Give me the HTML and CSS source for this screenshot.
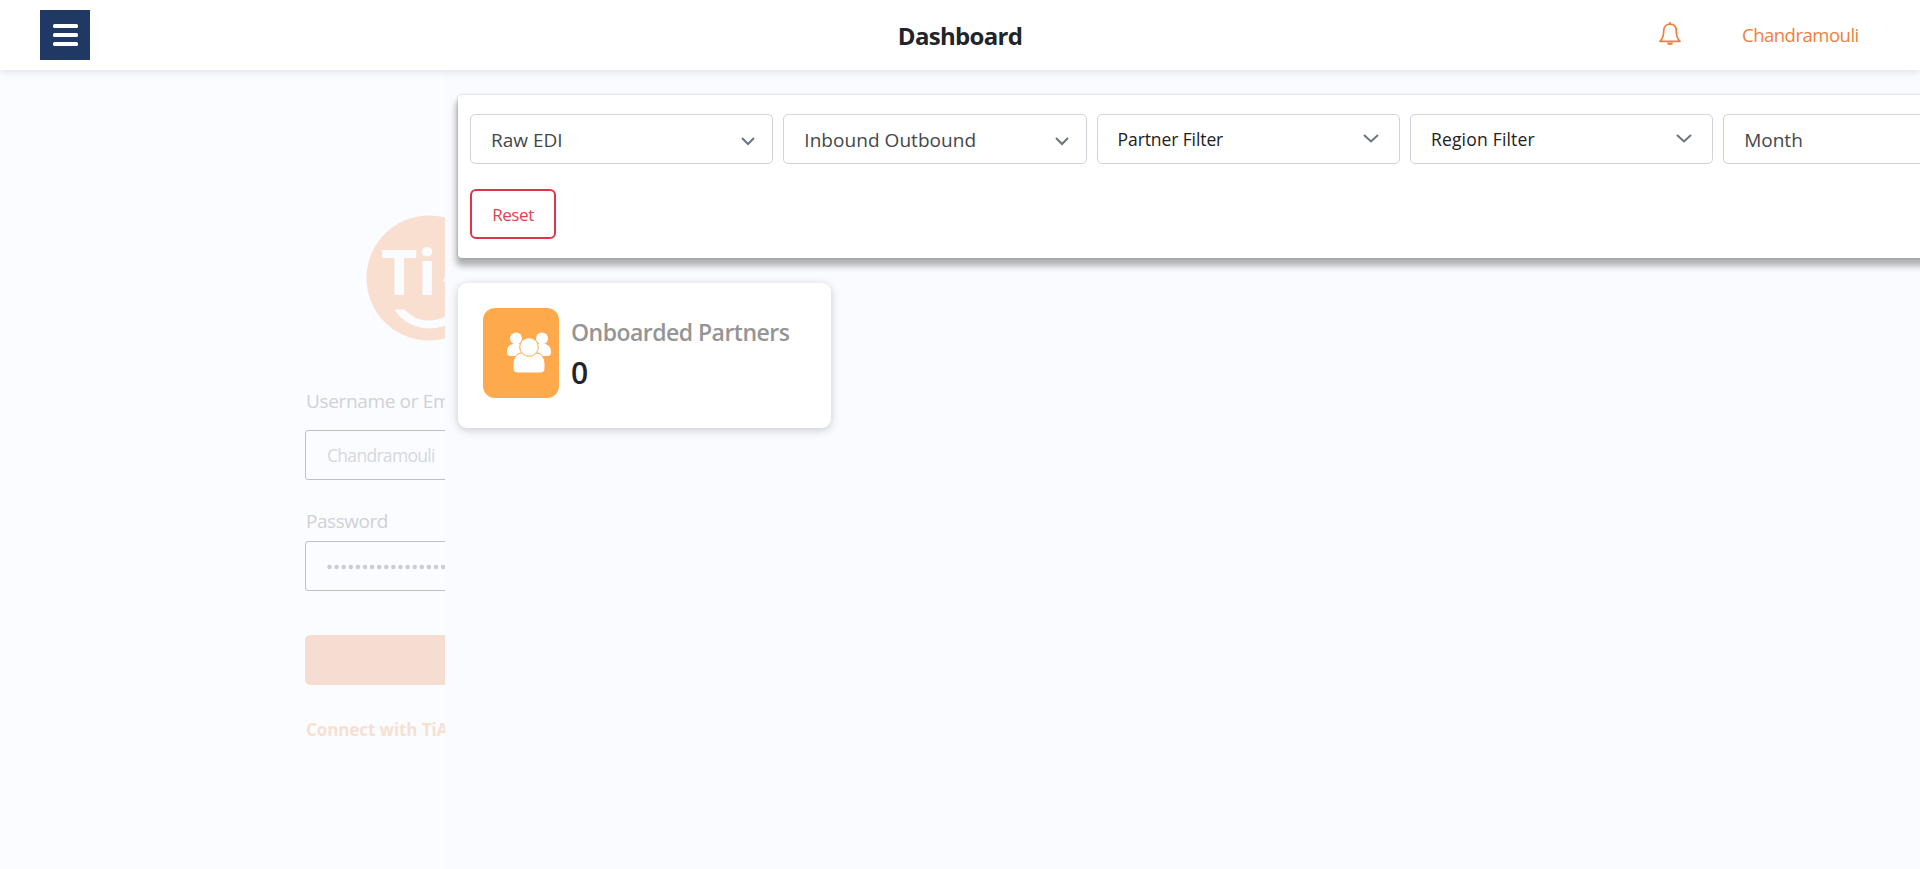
FILE: index.html
```html
<!DOCTYPE html>
<html lang="en">
<head>
<meta charset="utf-8">
<title>Dashboard</title>
<link rel="stylesheet" href="styles.css">
</head>
<body>
<header class="topbar">
  <button class="menu" aria-label="Menu"><span class="bar"></span><span class="bar"></span><span class="bar"></span></button>
  <h1 class="title">Dashboard</h1>
  <div class="account">
    <svg class="bell" viewBox="0 0 24 24"><path d="M12 2.200C8 2.200 5.700 5 5.700 9C5.700 14 4.500 17 2 19.300H22C19.500 17 18.300 14 18.300 9C18.300 5 16 2.200 12 2.200zM12 .800V2.200"/><path class="clapper" d="M9 20.500a3 2.500 0 0 0 6 0z"/></svg>
    <span class="user">Chandramouli</span>
  </div>
</header>
<div class="page">
  <section class="login">
    <svg class="logo" viewBox="0 0 126 126">
      <circle class="disc" cx="63" cy="63" r="62.5"/>
      <text class="logo-text" x="15" y="79.5">Ti</text>
      <path class="cut" d="M77 66.500 79 62V66.500zM28.500 94.500H38.500Q48 105.500 63 105.500Q74 105.500 82 100V109Q74 113.500 63 113.500Q40 112.500 28.500 94.500z"/>
    </svg>
    <label class="label">Username or Em</label>
    <div class="input"><span class="input-text">Chandramouli</span></div>
    <label class="label label-password">Password</label>
    <div class="input"><svg class="dots" viewBox="0 0 170 6"><path d="M2.500 3H170"/></svg></div>
    <div class="submit"></div>
    <a class="connect">Connect with TiA</a>
  </section>
  <main class="dashboard">
    <section class="filters">
      <div class="row">
        <div class="select"><span class="value raw">Raw EDI</span><svg class="arrow" viewBox="0 0 16 10"><path d="M2 2 8 8 14 2"/></svg></div>
        <div class="select"><span class="value inout">Inbound Outbound</span><svg class="arrow" viewBox="0 0 16 10"><path d="M2 2 8 8 14 2"/></svg></div>
        <div class="select"><span class="value picker">Partner Filter</span><svg class="arrow wide" viewBox="0 0 18 10"><path d="M2 2 9 8.500 16 2"/></svg></div>
        <div class="select"><span class="value picker region">Region Filter</span><svg class="arrow wide" viewBox="0 0 18 10"><path d="M2 2 9 8.500 16 2"/></svg></div>
        <div class="select"><span class="value month">Month</span></div>
      </div>
      <button class="reset">Reset</button>
    </section>
    <section class="card">
      <div class="badge">
        <svg class="people" viewBox="0 0 44 42">
          <circle cx="9" cy="6.500" r="6"/><circle cx="35" cy="6.500" r="6"/>
          <path d="M6 12H16V24H3Q0 24 0 20Q0 13 6 12zM38 12H28V24H41Q44 24 44 20Q44 13 38 12z"/>
          <path class="ring" d="M14 21H30Q37 22 38 31V36Q38 41 33 41H11Q6 41 6 36V31Q7 22 14 21z"/>
          <circle class="ring" cx="22" cy="15" r="9.300"/>
        </svg>
      </div>
      <div class="stat"><span class="stat-name">Onboarded Partners</span><span class="stat-value">0</span></div>
    </section>
  </main>
</div>
</body>
</html>
```
FILE: styles.css
```css
* { box-sizing: border-box; }
body {
  margin: 0;
  height: 869px;
  overflow: hidden;
  background: #fbfcff;
  font-family: "Open Sans", "Noto Sans", sans-serif;
  color: #212529;
}
.topbar {
  position: relative;
  display: grid;
  grid-template-columns: 1fr auto 1fr;
  align-items: center;
  height: 70px;
  padding: 0 62px 0 40px;
  background: #fff;
  box-shadow: 0 2px 8px rgba(33, 37, 41, .12);
}
.menu {
  display: flex;
  flex-direction: column;
  gap: 5px;
  width: 50px;
  height: 50px;
  padding: 14px 12px 0 13px;
  border: 0;
  background: #203864;
}
.bar { height: 4px; border-radius: 1.500px; background: #fff; }
.title {
  margin: 2px -22px 0 0;
  font-size: 24px;
  line-height: 34px;
  font-weight: 700;
  letter-spacing: -.7px;
}
.account {
  display: flex;
  justify-content: flex-end;
  align-items: center;
  gap: 60px;
  color: #ee7f40;
}
.bell { width: 24px; height: 24px; margin-top: -3px; fill: none; stroke: currentColor; stroke-width: 1.700; stroke-linejoin: round; stroke-linecap: round; }
.clapper { fill: currentColor; stroke: none; }
.user { width: 116px; margin-top: -2px; font-size: 18.500px; white-space: nowrap; letter-spacing: -.5px; }
.page { display: flex; height: 799px; }
.login {
  display: flex;
  flex-direction: column;
  flex: 0 0 445px;
  padding: 145px 0 0 305px;
  overflow: hidden;
  white-space: nowrap;
}
.logo { width: 126px; height: 126px; margin-left: 61px; flex: none; }
.disc { fill: #f9dfd0; }
.cut { fill: #fbfcff; }
.logo-text { fill: #fbfcff; font-size: 63px; font-weight: 700; }
.label {
  margin: 46px 0 0 1px;
  height: 43px;
  font-size: 19px;
  line-height: 28px;
  letter-spacing: -.35px;
  color: #cfd1d5;
}
.label-password { margin-top: 27px; height: 34px; letter-spacing: -.45px; }
.input {
  display: flex;
  align-items: center;
  flex: none;
  width: 300px;
  height: 50px;
  padding-left: 21px;
  border: 1px solid #bec0c4;
  border-radius: 3px;
}
.input-text { font-size: 17.500px; letter-spacing: -.7px; color: #d6d8dc; }
.dots { width: 170px; height: 6px; margin-top: 2px; stroke: #cbcdd1; stroke-width: 4.600; stroke-linecap: round; stroke-dasharray: 0 7.100; }
.submit {
  flex: none;
  width: 300px;
  height: 50px;
  margin-top: 44px;
  border-radius: 5px;
  background: #f6ddd1;
}
.connect { margin: 32px 0 0 1px; font-size: 17px; line-height: 26px; font-weight: 700; letter-spacing: -.1px; color: #f7dfd2; }
.dashboard {
  flex: 1;
  min-width: 0;
  padding: 25px 0 0 13px;
  overflow: hidden;
  background: #fafbff;
}
.filters {
  width: 1600px;
  height: 163px;
  padding: 19px 12px;
  border-radius: 4px;
  background: #fff;
  box-shadow: 0 0 3px rgba(0, 0, 0, .2), -1px 7px 6px 1px #b0b1b2;
}
.row { display: flex; gap: 10px; }
.select {
  display: flex;
  align-items: center;
  justify-content: space-between;
  flex: 0 0 303.300px;
  height: 50px;
  padding: 0 16px 0 20px;
  border: 1px solid #ced4da;
  border-radius: 5px;
}
.value { margin-top: 1px; font-size: 19px; line-height: 28px; color: #43474b; white-space: nowrap; }
.inout { letter-spacing: .05px; }
.picker { margin-top: -1px; font-size: 17.500px; letter-spacing: -.1px; color: #212121; }
.region { letter-spacing: .2px; }
.arrow { width: 16px; height: 10px; margin-top: 3px; fill: none; stroke: #6c757d; stroke-width: 2; }
.wide { width: 18px; margin: -2px 3px 0 0; }
.reset {
  width: 86px;
  height: 50px;
  margin-top: 25px;
  border: 2px solid #dc3545;
  border-radius: 6px;
  background: #fff;
  color: #e04352;
  font: 400 17px "Open Sans", sans-serif;
  letter-spacing: -.4px;
}
.card {
  display: flex;
  gap: 12px;
  width: 373px;
  height: 145px;
  margin-top: 25px;
  padding: 25px;
  border-radius: 9px;
  background: #fff;
  box-shadow: 0 2px 10px rgba(0, 0, 0, .2);
}
.badge { width: 76px; height: 90px; padding: 24px 0 0 24px; border-radius: 12px; background: #ffa94d; }
.people { display: block; width: 44px; height: 42px; fill: #fff; }
.ring { stroke: #ffa94d; stroke-width: 1; }
.stat { display: flex; flex-direction: column; white-space: nowrap; }
.stat-name { margin-top: 7px; font-size: 23px; line-height: 34px; font-weight: 600; letter-spacing: -.52px; color: #959595; }
.stat-value { margin-top: 2px; font-size: 30px; line-height: 44px; font-weight: 600; }
```
